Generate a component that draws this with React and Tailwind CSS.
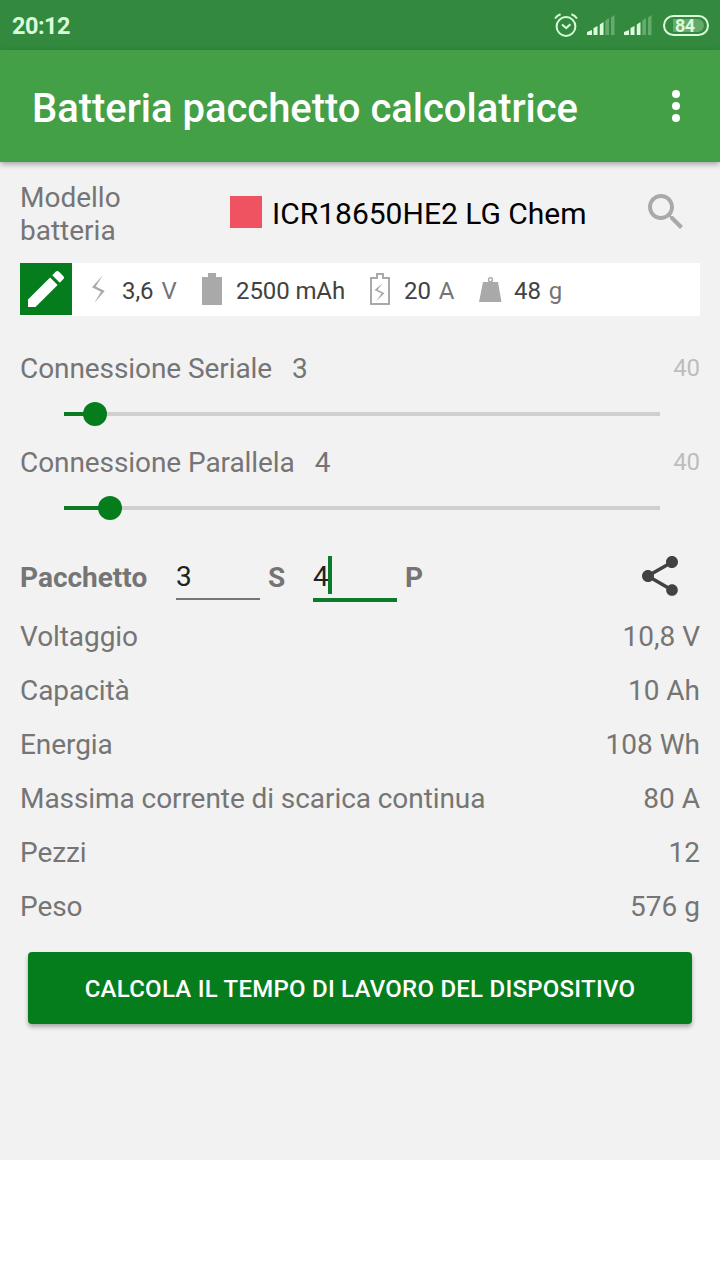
import React, { useState } from "react";

const MAX_CELLS = 40;

const cell = { voltage: 3.6, capacity: 2.5, current: 20, weight: 48 };

const format = (value) => String(Math.round(value * 100) / 100).replace(".", ",");

function AlarmIcon() {
  return (
    <svg width="24" height="24" viewBox="0 0 24 24" fill="none" stroke="#d9fbd9" strokeWidth="2">
      <circle cx="12" cy="13.5" r="9.4" />
      <path d="M8 11.500l4.200 3.600 4.200-3.800" />
      <path d="M1 5.500C2.400 3.300 4.200 1.900 6.600 1.200M23 5.500C21.600 3.300 19.800 1.900 17.400 1.200" />
    </svg>
  );
}

function SignalIcon() {
  return (
    <svg width="28" height="20" viewBox="0 0 28 20" fill="#dcfadc">
      <path d="M0 20v-3l5-2v5zM6.500 20v-7l4-2v9zM12.800 20V9.500l3.700-2.500v13z" />
      <path d="M18.300 20V5.500l3.700-2.500v17zM24 20V2.500l3.500-2.500v20z" opacity="0.3" />
    </svg>
  );
}

function StatusBar() {
  return (
    <div className="flex h-[50px] items-center bg-[#338a3e] pl-3 pr-[11px] text-[#dcfadc]">
      <span className="flex-1 pt-0.5 text-[23.5px] font-bold leading-7 tracking-[-0.5px]">20:12</span>
      <AlarmIcon />
      <div className="ml-[9px] flex gap-[9px]">
        <SignalIcon />
        <SignalIcon />
      </div>
      <div className="ml-[11px] flex h-[21px] w-[46px] items-center rounded-full border-2 border-[#dcfadc] pl-2 pr-[3px]">
        <span className="h-[13px] flex-1 rounded-r-full bg-[#65aa6b] pl-0.5 text-[18px] font-bold leading-[13px] tracking-[-0.5px]">
          84
        </span>
      </div>
    </div>
  );
}

function AppBar() {
  return (
    <header className="relative flex h-28 items-center justify-between bg-[#43a047] pl-8 pr-10 text-white shadow-[0_2px_6px_rgba(0,0,0,0.35)]">
      <h1 className="pt-1.5 text-[40px] font-medium leading-[48px] tracking-[-0.03px]">Batteria pacchetto calcolatrice</h1>
      <button className="flex flex-col gap-1">
        <span className="size-2 rounded-full bg-white" />
        <span className="size-2 rounded-full bg-white" />
        <span className="size-2 rounded-full bg-white" />
      </button>
    </header>
  );
}

function BatteryModel() {
  return (
    <div className="flex h-[66px]">
      <span className="w-[210px] leading-[33px]">
        Modello
        <br />
        batteria
      </span>
      <span className="mt-[15px] size-8 bg-[#ef5361]" />
      <span className="ml-2.5 mt-[15px] flex-1 text-[30px] leading-[35px] text-black">ICR18650HE2 LG Chem</span>
      <svg className="mr-2.5 mt-[7px]" width="48" height="48" viewBox="0 0 24 24" fill="#a9a9a9">
        <path d="M15.500 14h-.790l-.280-.270C15.410 12.590 16 11.110 16 9.500 16 5.910 13.090 3 9.500 3S3 5.910 3 9.500 5.910 16 9.500 16c1.610 0 3.090-.590 4.230-1.570l.270.280v.790l5 4.990L20.490 19l-4.990-5zm-6 0C7.010 14 5 11.990 5 9.500S7.010 5 9.500 5 14 7.010 14 9.500 11.990 14 9.500 14z" />
      </svg>
    </div>
  );
}

function BatterySpecs() {
  return (
    <div className="mt-4 flex h-[53px] bg-white text-[24px] leading-[56px] tracking-[-0.1px] text-[#424242]">
      <button className="flex size-[52px] items-center justify-center bg-[#067d1d]">
        <svg width="48" height="48" viewBox="0 0 24 24" fill="white">
          <path d="M3 17.250V21h3.750L17.810 9.940l-3.750-3.750L3 17.250zM20.710 7.040c.390-.390.390-1.020 0-1.410l-2.340-2.340c-.390-.390-1.020-.390-1.410 0l-1.830 1.830 3.750 3.750 1.830-1.830z" />
        </svg>
      </button>
      <div className="flex w-[130px]">
        <svg className="ml-5 mt-3" width="14" height="30" viewBox="0 0 14 30" fill="#a9a9a9">
          <path d="M11 0L0 12.300l9 4.500L2.300 28 12.700 16 3.700 11.500z" />
        </svg>
        <span className="ml-4">{format(cell.voltage)}</span>
        <span className="ml-2 text-[#757575]">V</span>
      </div>
      <div className="flex w-[168px]">
        <svg className="mt-2.5" width="20" height="32" viewBox="0 0 20 32" fill="#a9a9a9">
          <path d="M0 4h6V0h8v4h6v28H0z" />
        </svg>
        <span className="ml-3.5">{cell.capacity * 1000} mAh</span>
      </div>
      <div className="flex w-[109px]">
        <svg className="mt-2.5" width="20" height="32" viewBox="0 0 20 32" fill="none" stroke="#a9a9a9" strokeWidth="2">
          <path d="M1 5h6V1h6v4h6v26H1z" />
          <path d="M13 10L4.500 17l7 3.500L6 28.500l8.500-8.300-6.800-3.400z" fill="#a9a9a9" stroke="none" />
        </svg>
        <span className="ml-3.5">{cell.current}</span>
        <span className="ml-2 text-[#757575]">A</span>
      </div>
      <div className="flex">
        <svg className="mt-3.5" width="23" height="25" viewBox="0 0 23 25" fill="#a9a9a9">
          <path d="M4 5h15L22.500 25H0z" />
          <circle cx="11.500" cy="2.700" r="2" fill="white" stroke="#a9a9a9" strokeWidth="1.400" />
        </svg>
        <span className="ml-3">{cell.weight}</span>
        <span className="ml-2 text-[#757575]">g</span>
      </div>
    </div>
  );
}

function ConnectionSlider({ label, value, onChange }) {
  const percent = ((value - 1) / (MAX_CELLS - 1)) * 100;

  const handleClick = (e) => {
    const rect = e.currentTarget.getBoundingClientRect();
    const ratio = (e.clientX - rect.left) / rect.width;
    onChange(Math.min(MAX_CELLS, Math.max(1, Math.round(ratio * (MAX_CELLS - 1)) + 1)));
  };

  return (
    <div className="h-[94px]">
      <div className="flex leading-[33px] tracking-[-0.08px]">
        <span>{label}</span>
        <span className="ml-5 flex-1">{value}</span>
        <span className="text-[24px] text-[#bdbdbd]">{MAX_CELLS}</span>
      </div>
      <div onClick={handleClick} className="ml-11 mr-10 mt-[17px] flex h-6 items-center">
        <div className="h-1 bg-[#0b7a23]" style={{ width: `${percent}%` }} />
        <div className="z-10 -mx-3 size-6 rounded-full bg-[#067d1d]" />
        <div className="h-1 flex-1 bg-[#cfcfcf]" />
      </div>
    </div>
  );
}

function PackRow({ serial, parallel }) {
  return (
    <div className="mt-3 flex h-[57px] leading-[33px]">
      <span className="mt-[9px] w-[156px] font-bold">Pacchetto</span>
      <div className="h-[48px] w-[84px] border-b-2 border-[#757575] pt-2 text-[#212121]">{serial}</div>
      <span className="ml-2 mt-[9px] w-[45px] font-bold">S</span>
      <div className="flex h-[50px] w-[84px] border-b-4 border-[#0b7a2b] text-[#212121]">
        <span className="pt-2">{parallel}</span>
        <span className="-ml-px mt-1 h-[38px] w-1 bg-[#0b7a2b]" />
      </div>
      <span className="ml-2 mt-[9px] flex-1 font-bold">P</span>
      <svg className="mr-4" width="48" height="48" viewBox="0 0 24 24" fill="#424242">
        <path d="M18 16.080c-.760 0-1.440.300-1.960.770L8.910 12.700c.050-.230.090-.460.090-.700s-.040-.470-.090-.700l7.050-4.110c.540.500 1.250.810 2.040.810 1.660 0 3-1.340 3-3s-1.340-3-3-3-3 1.340-3 3c0 .240.040.470.090.700L8.040 9.810C7.500 9.310 6.790 9 6 9c-1.660 0-3 1.340-3 3s1.340 3 3 3c.790 0 1.500-.310 2.040-.810l7.120 4.160c-.050.210-.080.430-.080.650 0 1.610 1.310 2.920 2.920 2.920s2.920-1.310 2.920-2.920-1.310-2.920-2.920-2.920z" />
      </svg>
    </div>
  );
}

export default function App() {
  const [serial, setSerial] = useState(3);
  const [parallel, setParallel] = useState(4);

  const pieces = serial * parallel;
  const voltage = serial * cell.voltage;
  const capacity = parallel * cell.capacity;

  const results = [
    { label: "Voltaggio", value: `${format(voltage)} V` },
    { label: "Capacità", value: `${format(capacity)} Ah` },
    { label: "Energia", value: `${format(voltage * capacity)} Wh` },
    { label: "Massima corrente di scarica continua", value: `${parallel * cell.current} A` },
    { label: "Pezzi", value: pieces },
    { label: "Peso", value: `${pieces * cell.weight} g` },
  ];

  return (
    <div className="h-[1280px] w-[720px] overflow-hidden bg-white font-['Roboto',sans-serif]">
      <StatusBar />
      <AppBar />
      <main className="h-[998px] bg-[#f2f2f2] px-5 pt-[19px] text-[28px] text-[#757575]">
        <BatteryModel />
        <BatterySpecs />
        <div className="mt-9">
          <ConnectionSlider label="Connessione Seriale" value={serial} onChange={setSerial} />
          <ConnectionSlider label="Connessione Parallela" value={parallel} onChange={setParallel} />
        </div>
        <PackRow serial={serial} parallel={parallel} />
        {results.map((row) => (
          <div key={row.label} className="flex h-[54px] items-center justify-between leading-[33px]">
            <span className="tracking-[-0.07px]">{row.label}</span>
            <span>{row.value}</span>
          </div>
        ))}
        <button className="mx-2 mt-[19px] block h-[72px] w-[664px] rounded bg-[#067d1d] pt-0.5 text-[24px] font-medium tracking-[0.24px] text-white shadow-[0_3px_4px_rgba(0,0,0,0.3)]">
          CALCOLA IL TEMPO DI LAVORO DEL DISPOSITIVO
        </button>
      </main>
    </div>
  );
}
